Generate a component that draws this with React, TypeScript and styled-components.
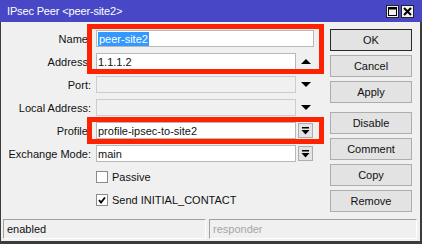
import React from 'react'
import styled, { createGlobalStyle } from 'styled-components'

const GlobalStyle = createGlobalStyle`
  html, body {
    margin: 0;
    padding: 0;
    background: #f0f0f0;
  }
  body {
    font-family: "Liberation Sans", Arial, sans-serif;
    font-size: 11px;
    color: #111;
  }
  #root {
    width: 422px;
    height: 244px;
  }
`

const Window = styled.div`
  width: 422px;
  height: 244px;
  display: flex;
  flex-direction: column;
  overflow: hidden;
`

const TitleBar = styled.div`
  height: 22px;
  flex: none;
  display: flex;
  align-items: center;
  padding: 0 8px 0 7px;
  box-sizing: border-box;
  background: #4848c6;
`

const TitleText = styled.div`
  flex: 1;
  color: #fff;
  font-size: 11px;
  letter-spacing: -0.15px;
`

const TitleButton = styled.div`
  width: 13px;
  height: 13px;
  box-sizing: border-box;
  margin-left: 2px;
  border: 1px solid #222;
  background: #f2f2f2;
  display: flex;
  align-items: center;
  justify-content: center;
`

const Frame = styled.div`
  flex: 1;
  display: flex;
  flex-direction: column;
  background: #f0f0f0;
  border-style: solid;
  border-color: #3c3c3c;
  border-width: 0 2px 3px 1px;
`

const Content = styled.div`
  flex: 1;
  display: flex;
`

const Form = styled.div`
  width: 313px;
  padding-top: 8px;
  display: flex;
  flex-direction: column;
  gap: 6px;
`

const Group = styled.div<{ $top: number; $bottom: number }>`
  position: relative;
  display: flex;
  flex-direction: column;
  gap: 6px;

  &::after {
    content: '';
    position: absolute;
    left: 86px;
    right: -10px;
    top: ${p => -p.$top}px;
    bottom: ${p => -p.$bottom}px;
    border: 5px solid #ff2200;
    pointer-events: none;
  }
`

const Row = styled.div`
  height: 17px;
  display: flex;
  align-items: center;
`

const Label = styled.div`
  width: 90px;
  margin-right: 5px;
  text-align: right;
  white-space: nowrap;
`

const Field = styled.div<{ $wide?: boolean; $disabled?: boolean }>`
  width: ${p => (p.$wide ? 218 : 200)}px;
  height: 17px;
  box-sizing: border-box;
  padding: 0 1px;
  display: flex;
  align-items: center;
  border: 1px solid ${p => (p.$disabled ? '#cccccc' : '#b8b8b8')};
  background: ${p => (p.$disabled ? '#f0f0f0' : '#fff')};
  white-space: nowrap;
`

const Selected = styled.span`
  background: #3399ff;
  color: #fff;
  padding: 1px 1px;
`

const Side = styled.div`
  width: 17px;
  height: 17px;
  margin-left: 1px;
  display: flex;
  align-items: center;
  justify-content: center;
`

const DropButton = styled.div`
  width: 15px;
  height: 15px;
  box-sizing: border-box;
  border: 1px solid #adadad;
  background: #e4e4e4;
  display: flex;
  align-items: center;
  justify-content: center;
`

const CheckRow = styled.div`
  height: 17px;
  padding-left: 95px;
  display: flex;
  align-items: center;
`

const Box = styled.div`
  width: 12px;
  height: 12px;
  box-sizing: border-box;
  margin-right: 4px;
  border: 1px solid #8a8a8a;
  background: #fff;
  display: flex;
  align-items: center;
  justify-content: center;
`

const Buttons = styled.div`
  width: 82px;
  margin-left: 16px;
  padding-top: 7px;
  display: flex;
  flex-direction: column;
  gap: 4px;
`

const Button = styled.div<{ $default?: boolean; $spaced?: boolean }>`
  height: 22px;
  box-sizing: border-box;
  margin-top: ${p => (p.$spaced ? 5 : 0)}px;
  border: 1px solid ${p => (p.$default ? '#2a2a2a' : '#adadad')};
  background: #e3e3e3;
  display: flex;
  align-items: center;
  justify-content: center;
  font-size: 11px;
  color: #111;
`

const StatusBar = styled.div`
  height: 25px;
  box-sizing: border-box;
  padding: 3px 3px 2px 2px;
  display: flex;
  gap: 3px;
`

const Panel = styled.div<{ $muted?: boolean; $width?: number }>`
  ${p => (p.$width ? `width: ${p.$width}px;` : 'flex: 1;')}
  height: 20px;
  box-sizing: border-box;
  padding-left: 3px;
  display: flex;
  align-items: center;
  border: 1px solid;
  border-color: #a0a0a0 #ffffff #ffffff #a0a0a0;
  color: ${p => (p.$muted ? '#a6a6a6' : '#111')};
`

const ArrowUp = () => (
  <svg width="10" height="5" viewBox="0 0 10 5">
    <polygon points="0,5 5,0 10,5" fill="#000" />
  </svg>
)

const ArrowDown = () => (
  <svg width="10" height="5" viewBox="0 0 10 5">
    <polygon points="0,0 10,0 5,5" fill="#000" />
  </svg>
)

const DropIcon = () => (
  <svg width="9" height="9" viewBox="0 0 9 9">
    <rect x="1" y="1" width="7" height="1.5" fill="#000" />
    <polygon points="0.5,4 8.5,4 4.5,8.5" fill="#000" />
  </svg>
)

const MaxIcon = () => (
  <svg width="9" height="9" viewBox="0 0 9 9">
    <rect x="0.5" y="0.5" width="8" height="8" fill="none" stroke="#000" />
    <rect x="0.5" y="0.5" width="8" height="2" fill="#000" />
  </svg>
)

const CloseIcon = () => (
  <svg width="9" height="9" viewBox="0 0 9 9">
    <path d="M1 1 L8 8 M8 1 L1 8" stroke="#000" strokeWidth="2" />
  </svg>
)

const Check = () => (
  <svg width="8" height="8" viewBox="0 0 8 8">
    <path d="M1 4 L3 6.5 L7 1.5" fill="none" stroke="#000" strokeWidth="1.8" />
  </svg>
)

export default function App() {
  return (
    <>
      <GlobalStyle />
      <Window>
        <TitleBar>
          <TitleText>IPsec Peer &lt;peer-site2&gt;</TitleText>
          <TitleButton><MaxIcon /></TitleButton>
          <TitleButton><CloseIcon /></TitleButton>
        </TitleBar>
        <Frame>
          <Content>
            <Form>
              <Group $top={6} $bottom={4}>
                <Row>
                  <Label>Name:</Label>
                  <Field $wide><Selected>peer-site2</Selected></Field>
                </Row>
                <Row>
                  <Label>Address:</Label>
                  <Field>1.1.1.2</Field>
                  <Side><ArrowUp /></Side>
                </Row>
              </Group>
              <Row>
                <Label>Port:</Label>
                <Field $disabled />
                <Side><ArrowDown /></Side>
              </Row>
              <Row>
                <Label>Local Address:</Label>
                <Field $disabled />
                <Side><ArrowDown /></Side>
              </Row>
              <Group $top={5} $bottom={5}>
                <Row>
                  <Label>Profile:</Label>
                  <Field>profile-ipsec-to-site2</Field>
                  <Side><DropButton><DropIcon /></DropButton></Side>
                </Row>
              </Group>
              <Row>
                <Label>Exchange Mode:</Label>
                <Field>main</Field>
                <Side><DropButton><DropIcon /></DropButton></Side>
              </Row>
              <CheckRow>
                <Box />
                Passive
              </CheckRow>
              <CheckRow>
                <Box><Check /></Box>
                Send INITIAL_CONTACT
              </CheckRow>
            </Form>
            <Buttons>
              <Button $default>OK</Button>
              <Button>Cancel</Button>
              <Button>Apply</Button>
              <Button $spaced>Disable</Button>
              <Button>Comment</Button>
              <Button>Copy</Button>
              <Button>Remove</Button>
            </Buttons>
          </Content>
          <StatusBar>
            <Panel $width={203}>enabled</Panel>
            <Panel $muted>responder</Panel>
          </StatusBar>
        </Frame>
      </Window>
    </>
  )
}
